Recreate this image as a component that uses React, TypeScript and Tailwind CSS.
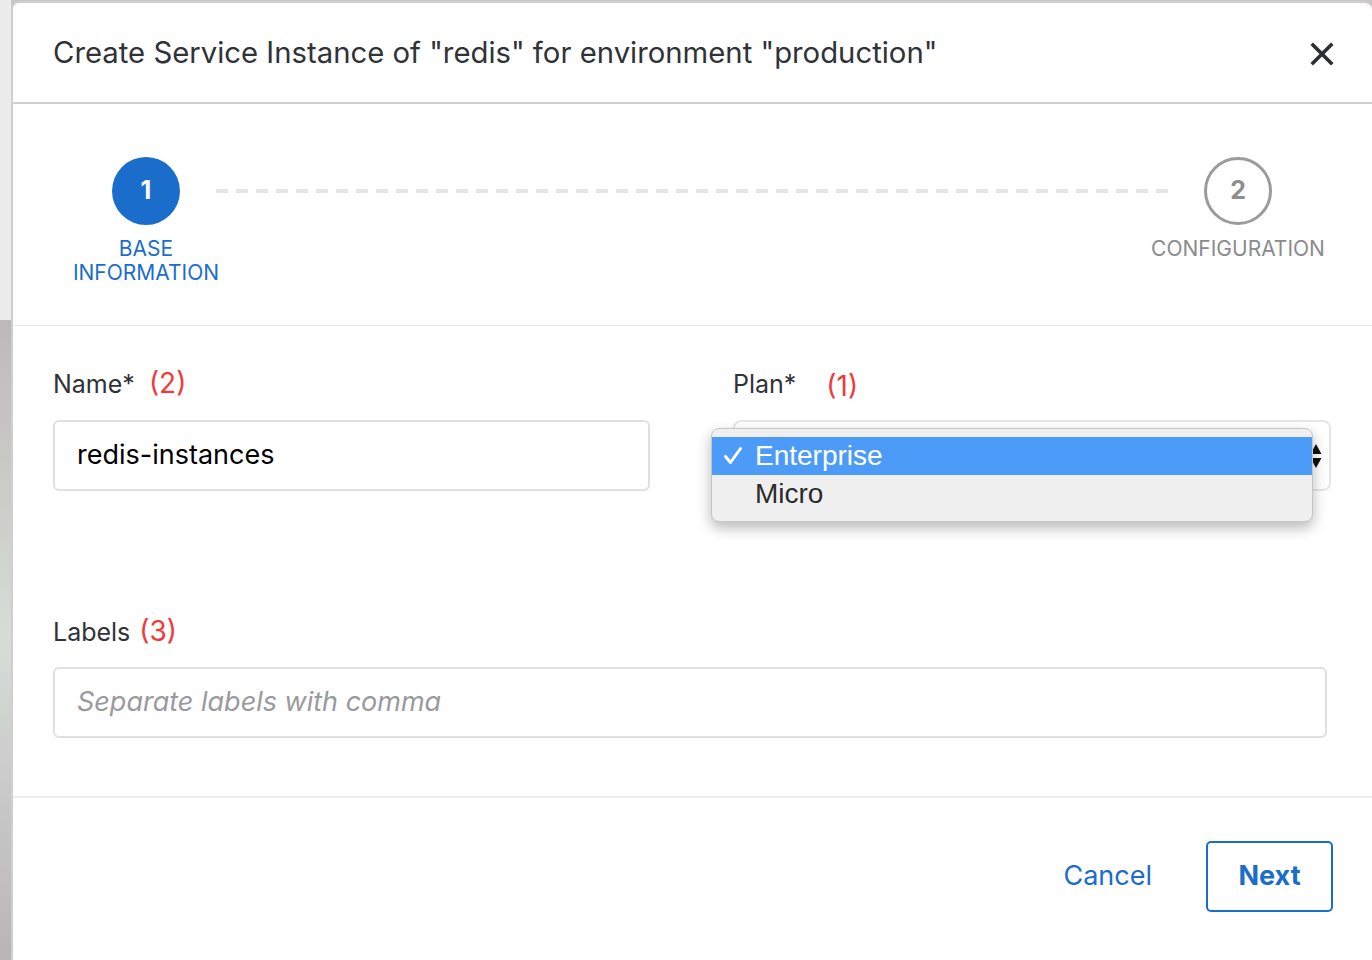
import React from 'react';

const font = { fontFamily: 'Inter, "Liberation Sans", Arial, sans-serif' };
const sysFont = { fontFamily: '"Liberation Sans", Arial, sans-serif' };

const Step: React.FC<{ n: number; label: string[]; active?: boolean }> = ({ n, label, active }) => (
  <div className="flex flex-col items-center w-[172px] shrink-0">
    <div
      className={`w-[68px] h-[68px] rounded-full flex items-center justify-center text-[25px] font-bold ${
        active ? 'bg-[#1b6dcb] text-white' : 'border-[3px] border-[#9b9b9b] text-[#8e8e8e]'
      }`}
    >
      {n}
    </div>
    <div className={`mt-[12px] text-[21px] leading-[24px] text-center whitespace-nowrap ${active ? 'text-[#1b6dcb]' : 'text-[#8b8b8b]'}`}>
      {label.map(l => (
        <div key={l}>{l}</div>
      ))}
    </div>
  </div>
);

const App: React.FC = () => {
  return (
    <div style={font} className="h-[960px] w-[1372px] overflow-hidden flex bg-[#c9c5c6]">
      <div className="w-[11px] shrink-0 flex flex-col">
        <div className="h-[320px] bg-[#ececec]" />
        <div className="flex-1 bg-gradient-to-b from-[#bdb9ba] via-[#d8dcd9] to-[#b9b5b7]" />
      </div>
      <div className="flex-1 min-w-0 mt-[1px] bg-white rounded-tl-[8px] rounded-tr-[8px] border-l-2 border-t-2 border-[#cfcfcf] flex flex-col">
        {/* header */}
        <div className="h-[101px] border-b-2 border-[#d0d0d0] flex items-center pl-[40px] pr-[38px] justify-between">
          <h1 className="text-[29.3px] text-[#2f3338] whitespace-nowrap">
            Create Service Instance of "redis" for environment "production"
          </h1>
          <svg width="24" height="24" viewBox="0 0 24 24" className="mt-[2px] shrink-0">
            <path d="M3 3 L21 21 M21 3 L3 21" stroke="#2b2f33" strokeWidth="3.6" strokeLinecap="square" />
          </svg>
        </div>

        {/* stepper */}
        <div className="h-[222px] border-b border-[#e8e8e8] flex items-start pt-[53px] pl-[47px] pr-[48px]">
          <Step n={1} label={['BASE', 'INFORMATION']} active />
          <div className="flex-1 mt-[32px] mx-[-16px] h-[4px] bg-[repeating-linear-gradient(90deg,#e4e4e4_0_12px,transparent_12px_20px)]" />
          <Step n={2} label={['CONFIGURATION']} />
        </div>

        {/* form */}
        <div className="h-[472px] border-b-2 border-[#ededed] pl-[40px] pr-[45px] pt-[42px]">
          <div className="flex gap-[83px]">
            <div className="w-[597px] shrink-0">
              <div className="text-[25px] text-[#2f3338] h-[30px] leading-[30px]">
                Name*<span className="text-[#f23a3a] ml-[14px] text-[28px]">(2)</span>
              </div>
              <div className="mt-[22px] h-[71px] border-2 border-[#e0e0e0] rounded-[6px] flex items-center px-[22px] text-[27px] text-black">
                redis-instances
              </div>
            </div>
            <div className="w-[598px] shrink-0 relative">
              <div className="text-[25px] text-[#2f3338] h-[30px] leading-[30px]">
                Plan*<span className="text-[#f23a3a] ml-[30px] text-[28px] relative top-[3px]">(1)</span>
              </div>
              <div className="mt-[22px] h-[71px] border-2 border-[#e6e6e6] rounded-[8px] flex items-center justify-end pr-[7px]">
                <svg width="12" height="26" viewBox="0 0 12 26">
                  <path d="M6 1 L11.5 11 L0.5 11 Z" fill="#111" />
                  <path d="M6 25 L11.5 15 L0.5 15 Z" fill="#111" />
                </svg>
              </div>
              {/* open native dropdown */}
              <div
                style={sysFont}
                className="absolute left-[-22px] top-[60px] w-[602px] h-[94px] rounded-[8px] bg-[#efefef] border border-[#c8c8c8] shadow-[0_6px_14px_rgba(0,0,0,0.28)] pt-[8px] overflow-hidden"
              >
                <div className="h-[38px] bg-[#4d9bf9] flex items-center text-white text-[28px]">
                  <span className="w-[43px] pl-[11px] flex items-center">
                    <svg width="20" height="20" viewBox="0 0 20 20">
                      <path d="M2.5 10.5 L7.5 16.5 L17.5 2.5" stroke="#fff" strokeWidth="3" fill="none" strokeLinecap="round" strokeLinejoin="round" />
                    </svg>
                  </span>
                  <span>Enterprise</span>
                </div>
                <div className="h-[38px] flex items-center text-[#2b2b2b] text-[28px] pl-[43px]">Micro</div>
              </div>
            </div>
          </div>

          <div className="mt-[125px] text-[25px] text-[#2f3338] h-[30px] leading-[30px]">
            Labels <span className="text-[#f23a3a] text-[28px] ml-[2px]">(3)</span>
          </div>
          <div className="mt-[21px] h-[71px] border-2 border-[#e0e0e0] rounded-[6px] flex items-center px-[22px] text-[27px] italic text-[#9a9a9e]">
            Separate labels with comma
          </div>
        </div>

        {/* footer */}
        <div className="flex-1 flex items-start justify-end pt-[43px] pr-[39px] gap-[54px]">
          <button className="h-[71px] text-[27px] text-[#1b6dcb]">Cancel</button>
          <button className="h-[71px] w-[127px] border-2 border-[#1b6dcb] rounded-[5px] text-[27px] font-bold text-[#1b6dcb]">
            Next
          </button>
        </div>
      </div>
    </div>
  );
};

export default App;
